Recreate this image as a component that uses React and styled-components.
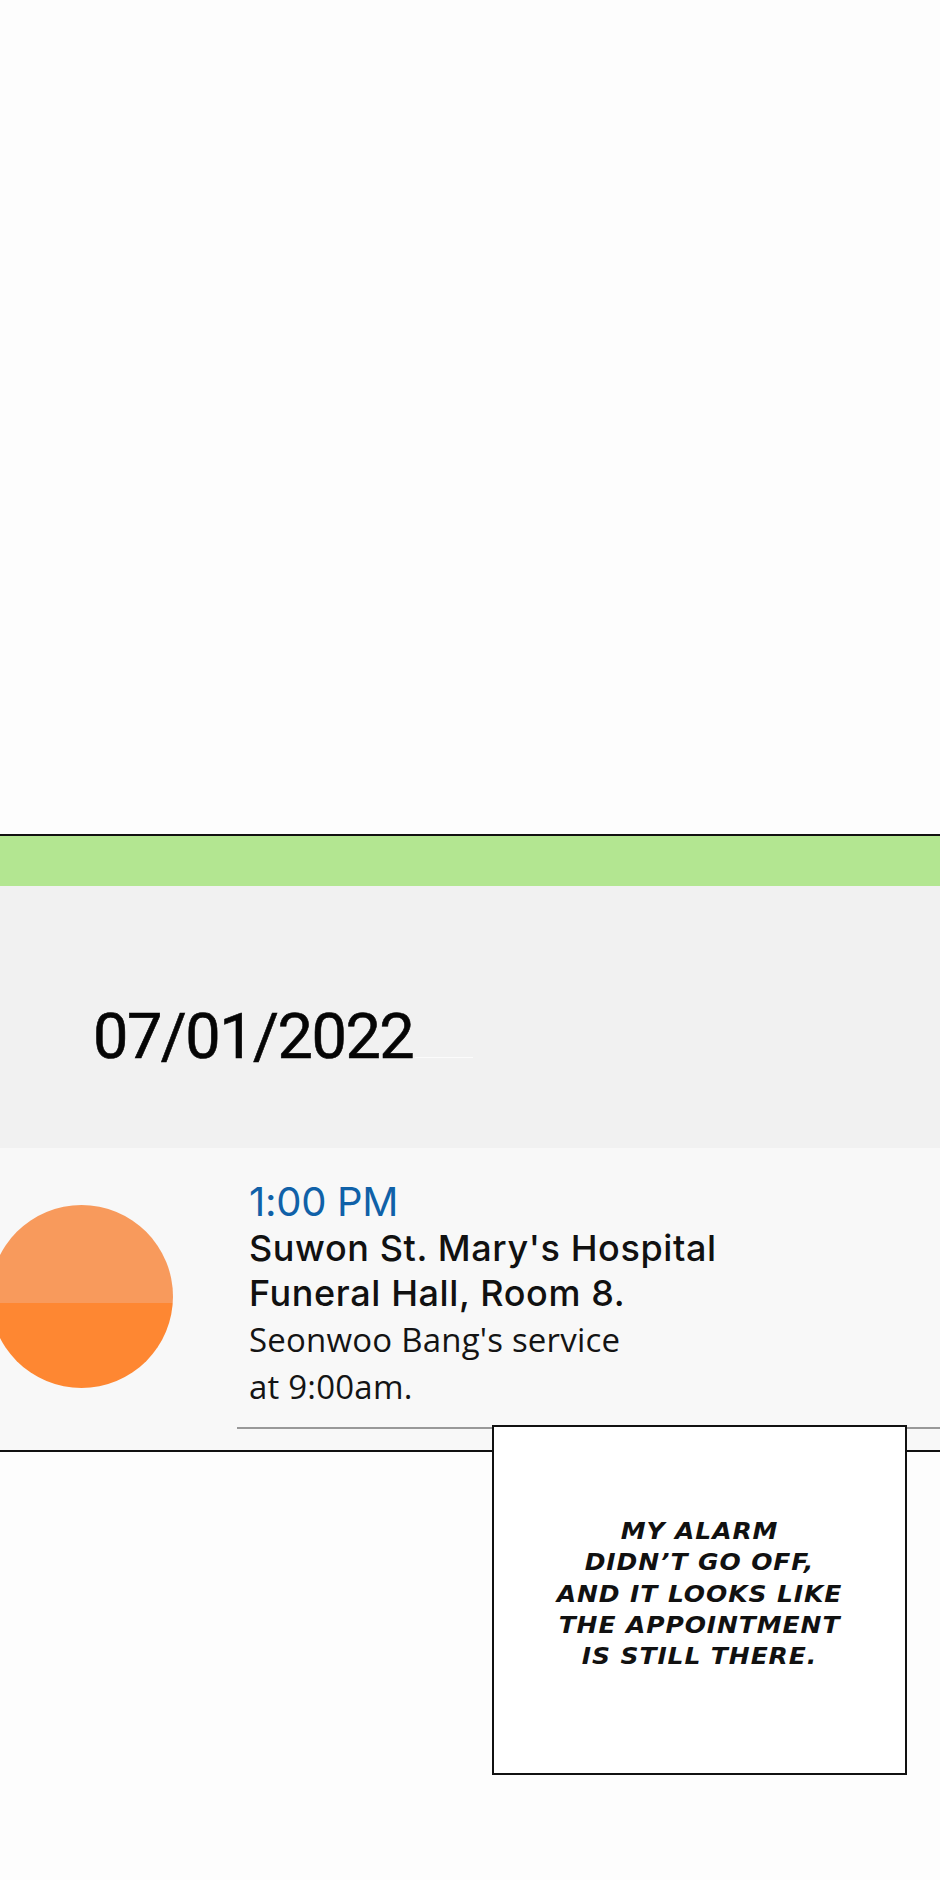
import React from "react";
import styled, { createGlobalStyle } from "styled-components";

const Global = createGlobalStyle`
  html, body { margin: 0; padding: 0; background: #fdfdfd; }
  body { font-family: "Liberation Sans", Arial, sans-serif; }
  #root { width: 940px; min-height: 1880px; }
`;

const Page = styled.div`
  position: relative;
  width: 940px;
  min-height: 1880px;
  background: #fdfdfd;
  overflow: hidden;
`;

const Blank = styled.div`
  height: 834px;
`;

const Panel = styled.section`
  border-top: 2px solid #111;
  border-bottom: 2px solid #111;
  display: flex;
  flex-direction: column;
`;

const StatusBar = styled.div`
  height: 50px;
  background: #b3e691;
`;

const DateBand = styled.div`
  height: 262px;
  box-sizing: border-box;
  background: #f1f1f1;
  padding: 119px 0 0 93px;
`;

const DateRow = styled.div`
  display: flex;
  align-items: flex-end;
`;

const DateText = styled.div`
  font-family: Roboto, "Liberation Sans", sans-serif;
  font-weight: 400;
  font-size: 63px;
  line-height: 63px;
  color: #050505;
  letter-spacing: -1.5px;
  -webkit-text-stroke: 0.6px #050505;
`;

const Trail = styled.span`
  width: 58px;
  height: 1px;
  background: #fbfbfb;
  margin: 0 0 10px 2px;
`;

const EventRow = styled.div`
  height: 302px;
  box-sizing: border-box;
  background: #f8f8f8;
  display: grid;
  grid-template-columns: 173px 1fr;
  column-gap: 64px;
`;

const Dot = styled.div`
  width: 183px;
  height: 183px;
  margin: 57px 0 0 -10px;
  border-radius: 50%;
  background: linear-gradient(to bottom, #f89a5c 0 53.5%, #fe8732 53.5% 100%);
`;

const Details = styled.div`
  display: flex;
  flex-direction: column;
  padding-top: 30px;
`;

const Body = styled.div`
  padding-left: 12px;
  display: flex;
  flex-direction: column;
`;

const Time = styled.div`
  font-family: Inter, Roboto, sans-serif;
  font-size: 40px;
  line-height: 48px;
  color: #1061a8;
  letter-spacing: -0.3px;
`;

const Title = styled.div`
  font-family: Inter, Roboto, sans-serif;
  font-weight: 500;
  font-size: 36px;
  line-height: 45px;
  color: #111;
  letter-spacing: 0.6px;
`;

const Note = styled.div`
  font-family: "Open Sans", "Noto Sans", sans-serif;
  font-size: 33px;
  line-height: 47px;
  color: #141414;
  letter-spacing: 0.2px;
`;

const Divider = styled.div`
  height: 2px;
  background: #999;
  margin-top: 17px;
`;

const Caption = styled.div`
  position: absolute;
  left: 492px;
  top: 1425px;
  width: 415px;
  height: 350px;
  box-sizing: border-box;
  border: 2px solid #111;
  background: #fff;
  padding-top: 88px;
  display: flex;
  flex-direction: column;
  align-items: center;
`;

const CaptionLine = styled.div`
  font-family: "DejaVu Sans", "Liberation Sans", sans-serif;
  font-style: italic;
  font-weight: 700;
  font-size: 25px;
  line-height: 31.3px;
  letter-spacing: 0.9px;
  text-transform: uppercase;
  color: #111;
  white-space: nowrap;
  transform: scaleY(0.95);
`;

const captionLines = [
  "My alarm",
  "didn\u2019t go off,",
  "and it looks like",
  "the appointment",
  "is still there.",
];

export default function App() {
  return (
    <>
      <Global />
      <Page>
        <Blank />
        <Panel>
          <StatusBar />
          <DateBand>
            <DateRow>
              <DateText>07/01/2022</DateText>
              <Trail />
            </DateRow>
          </DateBand>
          <EventRow>
            <Dot />
            <Details>
              <Body>
                <Time>1:00 PM</Time>
                <Title>Suwon St. Mary's Hospital</Title>
                <Title>Funeral Hall, Room 8.</Title>
                <Note>Seonwoo Bang's service</Note>
                <Note>at 9:00am.</Note>
              </Body>
              <Divider />
            </Details>
          </EventRow>
        </Panel>
        <Caption>
          {captionLines.map((l) => (
            <CaptionLine key={l}>{l}</CaptionLine>
          ))}
        </Caption>
      </Page>
    </>
  );
}
